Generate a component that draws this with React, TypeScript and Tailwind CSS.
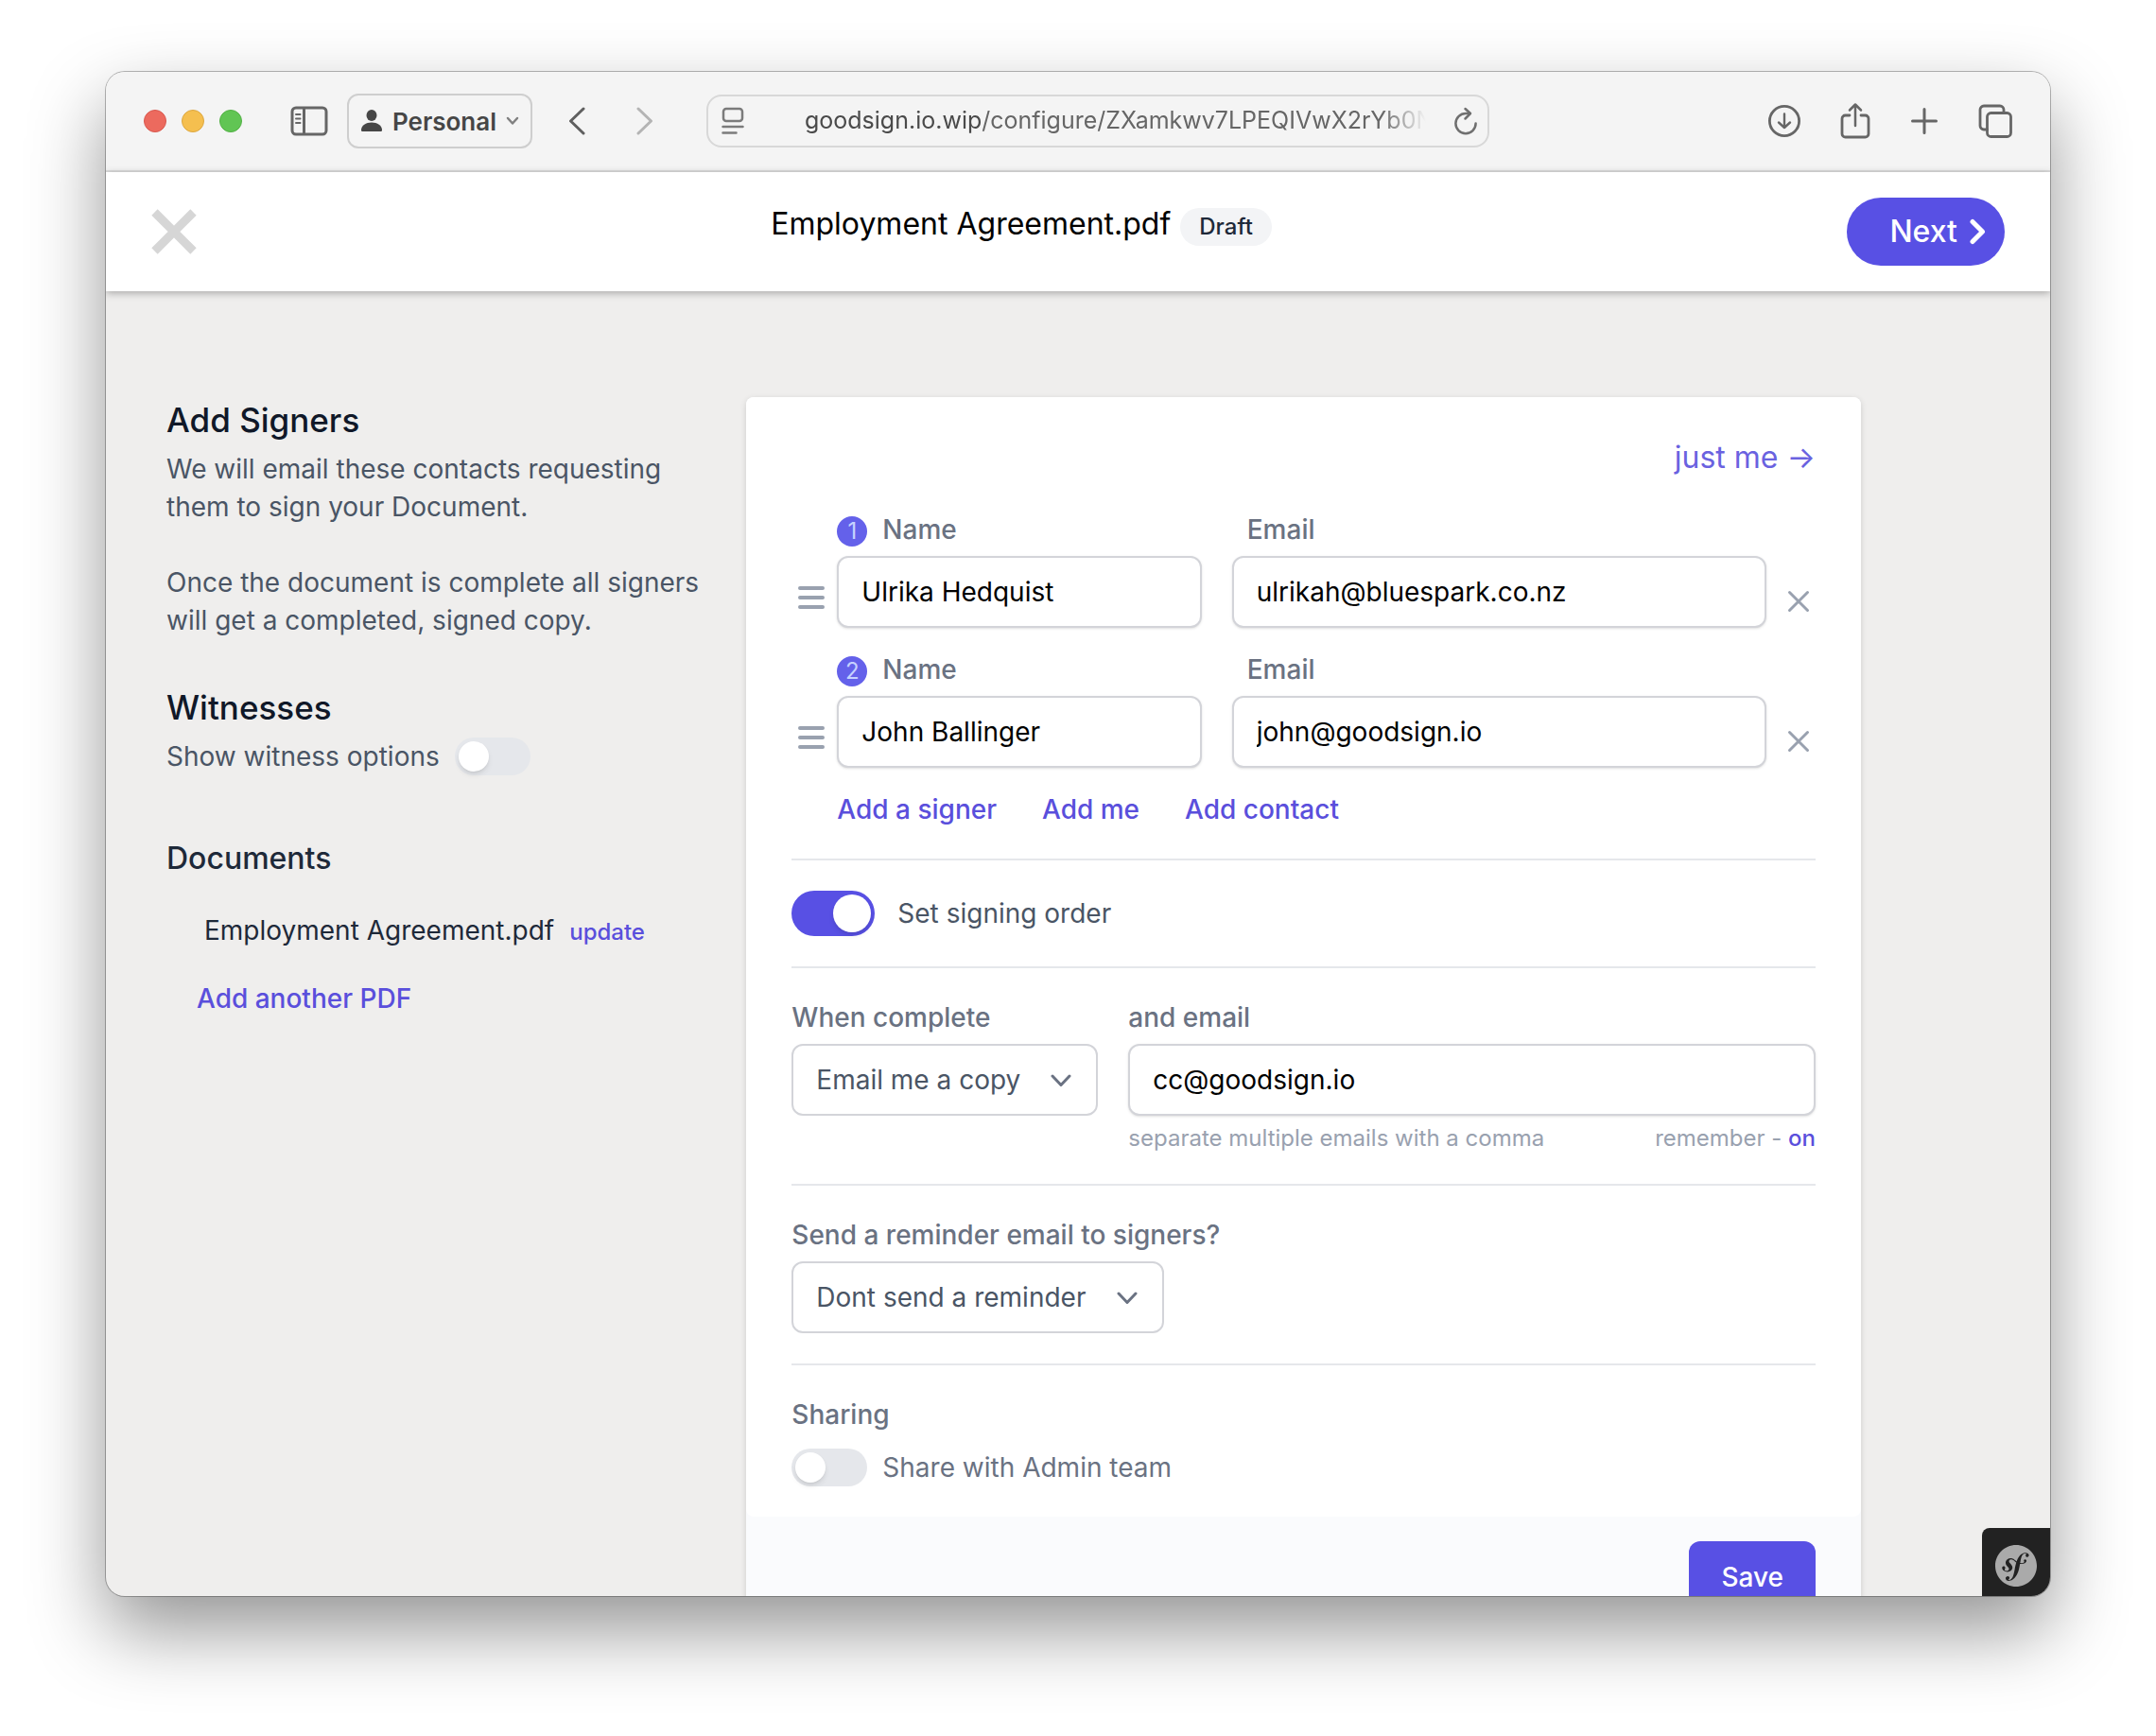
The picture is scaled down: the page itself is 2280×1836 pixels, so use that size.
import { useState } from "react"
import type { ReactNode } from "react"
import { SiSymfony } from "react-icons/si"

type Signer = {
  id: number
  name: string
  email: string
}

const initialSigners: Signer[] = [
  { id: 1, name: "Ulrika Hedquist", email: "ulrikah@bluespark.co.nz" },
  { id: 2, name: "John Ballinger", email: "john@goodsign.io" },
]

const inputClass =
  "h-[76px] w-full rounded-xl border-2 border-[#d3d4d9] bg-white px-6 text-[28px] text-black shadow-sm outline-none"
const linkClass = "text-[28px]/[40px] font-medium text-[#5a4fdc]"

function BrowserToolbar() {
  return (
    <div className="flex h-[106px] shrink-0 items-center border-b-2 border-[#dcdcdc] bg-[#f4f4f4] px-10 text-[#666]">
      <div className="flex gap-4">
        <span className="size-6 rounded-full border border-[#d8584e] bg-[#ec6a5e]" />
        <span className="size-6 rounded-full border border-[#dda73f] bg-[#f5bf4f]" />
        <span className="size-6 rounded-full border border-[#52b045] bg-[#61c554]" />
      </div>

      <button type="button" aria-label="Sidebar" className="ml-[51px]">
        <svg width="40" height="32" viewBox="0 0 40 32" fill="none" stroke="currentColor" strokeWidth="3">
          <rect x="2" y="2" width="36" height="28" rx="4" />
          <path d="M14.5 2v28" />
          <path d="M6 9h4.500M6 13.500h4.500M6 18h4.500" strokeWidth="2" strokeLinecap="round" />
        </svg>
      </button>

      <button
        type="button"
        className="ml-5 flex h-[58px] w-[196px] items-center justify-between rounded-xl border-2 border-[#cecece] px-3 text-[#464646]"
      >
        <svg width="24" height="26" viewBox="0 0 24 26" fill="currentColor">
          <ellipse cx="12" cy="7" rx="5.500" ry="6" />
          <path d="M1 22.500C1 17.500 6 14.500 12 14.500s11 3 11 8c0 1-.6 1.500-1.500 1.500h-19C1.600 24 1 23.500 1 22.500Z" />
        </svg>
        <span className="text-[26px] font-semibold">Personal</span>
        <svg width="14" height="10" viewBox="0 0 14 10" fill="none" stroke="#808080" strokeWidth="2.500" strokeLinecap="round" strokeLinejoin="round">
          <path d="M2 2l5 5.500L12 2" />
        </svg>
      </button>

      <button type="button" aria-label="Back" className="ml-[38px]">
        <svg width="18" height="30" viewBox="0 0 18 30" fill="none" stroke="#5f5f5f" strokeWidth="3" strokeLinecap="round" strokeLinejoin="round">
          <path d="M16 2L2.500 15 16 28" />
        </svg>
      </button>
      <button type="button" aria-label="Forward" className="ml-[54px]">
        <svg width="18" height="30" viewBox="0 0 18 30" fill="none" stroke="#b4b4b4" strokeWidth="3" strokeLinecap="round" strokeLinejoin="round">
          <path d="M2 2l13.500 13L2 28" />
        </svg>
      </button>

      <div className="ml-14 flex h-[56px] w-[828px] items-center rounded-2xl border-2 border-[#d8d8d8] pr-2.5 pl-3.5">
        <svg width="24" height="30" viewBox="0 0 24 30" fill="none" stroke="#7b7b7b" strokeWidth="2.500" strokeLinecap="round">
          <rect x="2" y="2" width="20" height="13" rx="3" />
          <path d="M1.500 21h21M1.500 27.500h14" />
        </svg>
        <div className="ml-16 min-w-0 flex-1 text-[25px] whitespace-nowrap text-[#666] [mask-image:linear-gradient(to_right,black_91%,transparent_98%)]">
          <span className="text-[#4a4a4a]">goodsign.io.wip</span>/configure/ZXamkwv7LPEQIVwX2rYb0N
        </div>
        <button type="button" aria-label="Reload" className="ml-4">
          <svg width="26" height="30" viewBox="0 0 26 30" fill="none" stroke="#6f6f6f" strokeWidth="2.500" strokeLinecap="round" strokeLinejoin="round">
            <path d="M17.500 7H13A10.600 10.600 0 1 0 23.600 17.600" />
            <path d="M12.500 2l5.500 5-5.500 5.500" />
          </svg>
        </button>
      </div>

      <div className="ml-auto flex items-center gap-[41px]">
        <button type="button" aria-label="Downloads">
          <svg width="36" height="36" viewBox="0 0 36 36" fill="none" stroke="currentColor" strokeWidth="2.800" strokeLinecap="round" strokeLinejoin="round">
            <circle cx="18" cy="18" r="15.600" />
            <path d="M18 10.500v14.500M12 19.500l6 5.500 6-5.500" strokeWidth="2.400" />
          </svg>
        </button>
        <button type="button" aria-label="Share">
          <svg width="32" height="40" viewBox="0 0 32 40" fill="none" stroke="currentColor" strokeWidth="2.800" strokeLinecap="round" strokeLinejoin="round">
            <path d="M10 14H5.500A3.500 3.500 0 0 0 2 17.500v16A3.500 3.500 0 0 0 5.500 37h21a3.500 3.500 0 0 0 3.500-3.500v-16a3.500 3.500 0 0 0-3.500-3.500H22" />
            <path d="M16 25V3M10 8.500L16 2.500l6 6" strokeWidth="2.500" />
          </svg>
        </button>
        <button type="button" aria-label="New tab">
          <svg width="32" height="32" viewBox="0 0 32 32" fill="none" stroke="currentColor" strokeWidth="3" strokeLinecap="round">
            <path d="M16 3.500v25M3.500 16h25" />
          </svg>
        </button>
        <button type="button" aria-label="Tab overview">
          <svg width="36" height="36" viewBox="0 0 36 36" fill="none" stroke="currentColor" strokeWidth="2.800" strokeLinecap="round" strokeLinejoin="round">
            <rect x="9.500" y="9.500" width="25" height="25" rx="4" />
            <path d="M9.500 27H6a4 4 0 0 1-4-4V6a4 4 0 0 1 4-4h17a4 4 0 0 1 4 4v3.500" />
          </svg>
        </button>
      </div>
    </div>
  )
}

function PageHeader() {
  return (
    <header className="relative z-10 grid h-[126px] shrink-0 grid-cols-[1fr_auto_1fr] items-center bg-white px-12 shadow-[0_2px_8px_rgba(0,0,0,0.3)]">
      <button type="button" aria-label="Close" className="justify-self-start">
        <svg width="48" height="48" viewBox="0 0 48 48" fill="none" stroke="#d6d6d6" strokeWidth="9">
          <path d="M3.500 3.500l41 41M44.500 3.500l-41 41" />
        </svg>
      </button>
      <div className="flex items-baseline gap-2.5 pr-30 pb-4">
        <h1 className="text-[32px]/[48px] text-black">Employment Agreement.pdf</h1>
        <span className="rounded-full bg-[#f3f4f6] px-5 text-[24px]/[40px] font-medium text-gray-800">Draft</span>
      </div>
      <button
        type="button"
        className="flex h-[72px] items-center gap-3 justify-self-end rounded-full bg-[#5850e4] pr-[18px] pl-[45px] text-[32px] font-medium text-white"
      >
        Next
        <svg width="20" height="28" viewBox="0 0 20 28" fill="none" stroke="currentColor" strokeWidth="5" strokeLinecap="round" strokeLinejoin="round">
          <path d="M4 3.500L14.500 14 4 24.500" />
        </svg>
      </button>
    </header>
  )
}

function Toggle({ id, defaultChecked }: { id: string; defaultChecked?: boolean }) {
  return (
    <input
      id={id}
      type="checkbox"
      defaultChecked={defaultChecked}
      className="h-10 w-20 shrink-0 appearance-none rounded-full bg-gray-200 p-1 before:block before:size-8 before:rounded-full before:bg-white before:shadow-md checked:h-12 checked:w-22 checked:bg-[#5850e4] checked:before:ml-10 checked:before:size-10"
    />
  )
}

function Sidebar() {
  return (
    <aside>
      <h2 className="text-[35px]/[48px] font-medium text-gray-900">Add Signers</h2>
      <p className="mt-2 text-[28px]/[40px] text-gray-600">
        We will email these contacts requesting
        <br />
        them to sign your Document.
        <br />
        <br />
        Once the document is complete all signers
        <br />
        will get a completed, signed copy.
      </p>

      <h2 className="mt-12 text-[35px]/[48px] font-medium text-gray-900">Witnesses</h2>
      <div className="mt-2 flex items-center gap-4">
        <label htmlFor="witness" className="text-[28px]/[40px] text-gray-600">
          Show witness options
        </label>
        <Toggle id="witness" />
      </div>

      <h3 className="mt-16 text-[32px]/[48px] font-medium text-gray-800">Documents</h3>
      <div className="mt-8 flex items-baseline gap-4 pl-10">
        <span className="text-[28px]/[40px] text-gray-800">Employment Agreement.pdf</span>
        <a href="#update" className="text-[24px]/[32px] font-medium text-[#5a4fdc]">
          update
        </a>
      </div>
      <div className="mt-8 pl-8">
        <a href="#add-pdf" className={`block ${linkClass}`}>
          Add another PDF
        </a>
      </div>
    </aside>
  )
}

function SignerRow({ signer, index, onRemove }: { signer: Signer; index: number; onRemove: () => void }) {
  return (
    <div className="flex items-end">
      <button type="button" aria-label="Reorder" className="flex h-16 w-12 items-center pl-1.5 text-gray-400">
        <svg width="30" height="26" viewBox="0 0 30 26" fill="none" stroke="currentColor" strokeWidth="4" strokeLinecap="round">
          <path d="M3 3h24M3 13h24M3 23h24" />
        </svg>
      </button>
      <div className="grid flex-1 grid-cols-[15fr_22fr] gap-8">
        <div>
          <div className="mb-2 flex items-center gap-4">
            <span className="mt-1 flex size-8 items-center justify-center rounded-full bg-[#6461ea] text-[24px] text-indigo-200">
              {index}
            </span>
            <label htmlFor={`name-${signer.id}`} className="text-[28px]/[40px] font-medium text-gray-500">
              Name
            </label>
          </div>
          <input id={`name-${signer.id}`} type="text" defaultValue={signer.name} className={inputClass} />
        </div>
        <div>
          <label htmlFor={`email-${signer.id}`} className="mb-2 block pl-4 text-[28px]/[40px] font-medium text-gray-500">
            Email
          </label>
          <input id={`email-${signer.id}`} type="email" defaultValue={signer.email} className={inputClass} />
        </div>
      </div>
      <button
        type="button"
        aria-label="Remove signer"
        onClick={onRemove}
        className="flex h-14 w-[52px] items-center pl-5.5 text-gray-400"
      >
        <svg width="24" height="24" viewBox="0 0 24 24" fill="none" stroke="currentColor" strokeWidth="3" strokeLinecap="round">
          <path d="M2.500 2.500l19 19M21.500 2.500l-19 19" />
        </svg>
      </button>
    </div>
  )
}

function SelectBox({ id, width, children }: { id: string; width: string; children: ReactNode }) {
  return (
    <div className={`relative ${width}`}>
      <select
        id={id}
        className="h-[76px] w-full appearance-none rounded-xl border-2 border-[#d3d4d9] bg-white px-6 text-[28px] text-gray-600 outline-none"
      >
        {children}
      </select>
      <svg
        className="pointer-events-none absolute top-8 right-7 text-gray-500"
        width="22"
        height="14"
        viewBox="0 0 22 14"
        fill="none"
        stroke="currentColor"
        strokeWidth="3"
        strokeLinecap="round"
        strokeLinejoin="round"
      >
        <path d="M2 2l9 9.500L20 2" />
      </svg>
    </div>
  )
}

function SignerForm() {
  const [signers, setSigners] = useState<Signer[]>(initialSigners)

  const removeSigner = (id: number) => {
    setSigners((prev) => prev.filter((s) => s.id !== id))
  }

  return (
    <form className="col-span-2 rounded-lg bg-[#fafbfd] shadow-[0_2px_6px_rgba(0,0,0,0.15)]">
      <div className="divide-y-2 divide-gray-200 rounded-lg bg-white px-12 pt-10 pb-8">
        <section className="pb-8">
          <div className="flex justify-end">
            <a href="#just-me" className="text-[32px]/[48px] text-[#6a62e0]">
              just me →
            </a>
          </div>
          <div className="mt-8 flex flex-col gap-6">
            {signers.map((signer, i) => (
              <SignerRow key={signer.id} signer={signer} index={i + 1} onRemove={() => removeSigner(signer.id)} />
            ))}
          </div>
          <div className="mt-6 flex gap-12 pl-12">
            <button type="button" className={linkClass}>
              Add a signer
            </button>
            <button type="button" className={linkClass}>
              Add me
            </button>
            <button type="button" className={linkClass}>
              Add contact
            </button>
          </div>
        </section>

        <section className="flex items-center gap-6 py-8">
          <Toggle id="signing-order" defaultChecked />
          <label htmlFor="signing-order" className="text-[28px]/[40px] text-gray-600">
            Set signing order
          </label>
        </section>

        <section className="flex gap-8 py-8">
          <div>
            <label htmlFor="when-complete" className="mb-2 block text-[28px]/[40px] font-medium text-gray-500">
              When complete
            </label>
            <SelectBox id="when-complete" width="w-[324px]">
              <option>Email me a copy</option>
            </SelectBox>
          </div>
          <div className="flex-1">
            <label htmlFor="cc" className="mb-2 block text-[28px]/[40px] font-medium text-gray-500">
              and email
            </label>
            <input id="cc" type="text" defaultValue="cc@goodsign.io" className={inputClass} />
            <div className="mt-2 flex justify-between text-[24px]/[32px] text-gray-400">
              <span>separate multiple emails with a comma</span>
              <span>
                remember -{" "}
                <a href="#remember" className="font-medium text-[#5a4fdc]">
                  on
                </a>
              </span>
            </div>
          </div>
        </section>

        <section className="py-8">
          <label htmlFor="reminder" className="mb-2 block text-[28px]/[40px] font-medium text-gray-500">
            Send a reminder email to signers?
          </label>
          <SelectBox id="reminder" width="w-[394px]">
            <option>Dont send a reminder</option>
          </SelectBox>
        </section>

        <section className="pt-8">
          <h4 className="text-[28px]/[40px] font-medium text-gray-500">Sharing</h4>
          <div className="mt-4 flex items-center gap-4">
            <Toggle id="share" />
            <label htmlFor="share" className="text-[28px]/[40px] text-gray-500">
              Share with Admin team
            </label>
          </div>
        </section>
      </div>

      <div className="flex justify-end px-12 py-[26px]">
        <button type="button" className="h-[76px] rounded-xl bg-[#5850e4] px-[34px] text-[28px] font-medium text-white">
          Save
        </button>
      </div>
    </form>
  )
}

export default function App() {
  return (
    <div className="h-screen bg-white px-28 pt-[76px] pb-[148px] font-['Inter',sans-serif]">
      <div className="relative flex h-full flex-col overflow-hidden rounded-[20px] bg-[#efeeed] shadow-[0_0_0_1px_rgba(0,0,0,0.28),0_36px_80px_rgba(0,0,0,0.42)]">
        <BrowserToolbar />
        <PageHeader />
        <main className="min-h-0 flex-1 overflow-hidden">
          <div className="grid grid-cols-3 items-start gap-12 pt-28 pr-[200px] pl-16">
            <Sidebar />
            <SignerForm />
          </div>
        </main>

        {/* Symfony debug toolbar */}
        <button
          type="button"
          aria-label="Symfony toolbar"
          className="absolute right-0 bottom-0 flex size-[72px] items-center justify-center rounded-tl-lg bg-[#222] pt-2 text-[#aaa]"
        >
          <SiSymfony size={44} />
        </button>
      </div>
    </div>
  )
}
